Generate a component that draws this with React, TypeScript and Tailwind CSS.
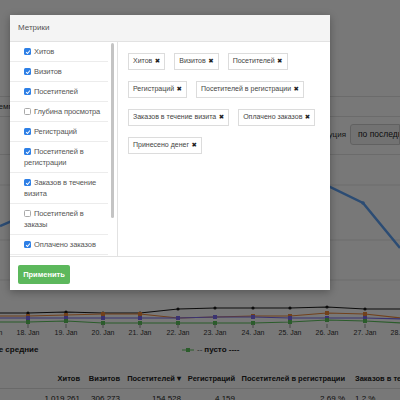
import React from "react";

type Metric = { label: string; checked: boolean };

const metrics: Metric[] = [
  { label: "Хитов", checked: true },
  { label: "Визитов", checked: true },
  { label: "Посетителей", checked: true },
  { label: "Глубина просмотра", checked: false },
  { label: "Регистраций", checked: true },
  { label: "Посетителей в регистрации", checked: true },
  { label: "Заказов в течение визита", checked: true },
  { label: "Посетителей в заказы", checked: false },
  { label: "Оплачено заказов", checked: true },
];

const selected = [
  "Хитов",
  "Визитов",
  "Посетителей",
  "Регистраций",
  "Посетителей в регистрации",
  "Заказов в течение визита",
  "Оплачено заказов",
  "Принесено денег",
];

const days = ["17. Jan", "18. Jan", "19. Jan", "20. Jan", "21. Jan", "22. Jan", "23. Jan", "24. Jan", "25. Jan", "26. Jan", "27. Jan", "28. Jan"];

// x positions of the chart points, one per day
const xs = [-9, 28, 66, 103, 140, 178, 215, 253, 290, 327, 365, 402];

const series = [
  { color: "#1a1a1a", ys: [13, 13, 12, 13, 13, 9, 8, 8, 8, 7, 9, 9], square: false },
  { color: "#f08a3c", ys: [16, 16, 15, 14, 14, 18, 17, 16, 16, 13, 14, 18], square: true },
  { color: "#7b6cf0", ys: [18, 18, 18, 18, 18, 18, 17, 17, 18, 18, 18, 19], square: true },
  { color: "#5cc35c", ys: [22, 22, 21, 23, 23, 23, 23, 23, 22, 20, 21, 23], square: true },
];

function Checkbox({ checked }: { checked: boolean }) {
  if (!checked) {
    return <span className="mr-[3px] inline-block h-[7px] w-[7px] rounded-[1.5px] border border-[#a9a9a9] bg-white align-[-0.5px]" />;
  }
  return (
    <span className="mr-[3px] inline-flex h-[7px] w-[7px] items-center justify-center rounded-[1.5px] bg-[#2d7fe6] align-[-0.5px]">
      <svg viewBox="0 0 8 8" className="h-[6px] w-[6px]">
        <path d="M1.5 4.2 L3.3 6 L6.6 2" fill="none" stroke="white" strokeWidth="1.4" />
      </svg>
    </span>
  );
}

export default function App() {
  return (
    <div className="relative flex h-[400px] w-[400px] flex-col overflow-hidden bg-white font-['Liberation_Sans',Arial,sans-serif] text-[#222]">
      {/* page behind the dialog */}
      <div className="h-[97px] shrink-0 border-b border-[#e4e4e4]" />
      <div className="flex h-[20px] shrink-0 items-center border-b border-[#e4e4e4] text-[8px] text-[#333]">
        <span className="-ml-[6px]">Темп прироста</span>
      </div>
      <div className="flex h-[38px] shrink-0 items-start justify-end gap-[4px] border-b border-[#e4e4e4] pt-[7px] text-[8px] text-[#333]">
        <span className="mt-[5px]">Атрибуция</span>
        <div className="flex h-[21px] w-[50px] items-center overflow-hidden whitespace-nowrap rounded-l-[3px] border border-[#cfcfcf] bg-[#f2f2f2] pl-[7px] text-[8.5px] text-[#222]">
          по последнему
        </div>
      </div>
      <svg width="400" height="145" className="block shrink-0">
        <line x1="0" y1="30" x2="400" y2="30" stroke="#e6e6e6" />
        <line x1="0" y1="85" x2="400" y2="85" stroke="#e6e6e6" />
        <line x1="0" y1="125" x2="400" y2="125" stroke="#e6e6e6" />
        <polyline
          points="0,71 12,66 60,30 150,12 250,8 330,32 363,48 400,93"
          fill="none"
          stroke="#5fa2f5"
          strokeWidth="2.5"
        />
        <circle cx="363" cy="48" r="1.8" fill="#5fa2f5" />
      </svg>
      <svg width="400" height="28" className="block shrink-0">
        {series.map((s, i) => (
          <g key={i}>
            <polyline points={xs.map((x, j) => `${x},${s.ys[j]}`).join(" ")} fill="none" stroke={s.color} strokeWidth="1.2" />
            {xs.map((x, j) =>
              s.square ? (
                <rect key={j} x={x - 2} y={s.ys[j] - 2} width="4" height="4" fill={s.color} />
              ) : (
                <circle key={j} cx={x} cy={s.ys[j]} r="1.6" fill={s.color} />
              )
            )}
          </g>
        ))}
        {xs.map((x, j) => (
          <line key={j} x1={x} y1="24" x2={x} y2="28" stroke="#999" />
        ))}
      </svg>
      <div className="relative h-[10px] shrink-0 text-[7px] leading-[10px] text-[#333]">
        {days.map((d, j) => (
          <span key={d} className="absolute top-0 -translate-x-1/2 whitespace-nowrap" style={{ left: xs[j] }}>
            {d}
          </span>
        ))}
      </div>
      <div className="mt-[5px] flex h-[14px] shrink-0 items-center whitespace-nowrap text-[8px] text-[#222]">
        <span className="-ml-[46px] w-[228px] font-bold">Скользящие средние</span>
        <svg width="12" height="6" className="mr-[3px] shrink-0">
          <line x1="0" y1="3" x2="12" y2="3" stroke="#5cc35c" />
          <rect x="4" y="1" width="4" height="4" fill="#5cc35c" />
        </svg>
        <span className="text-[#555]">-- </span>
        <span className="ml-[2px] font-bold">пусто ----</span>
      </div>
      <div className="mt-[13px] grid shrink-0 grid-cols-[84px_40px_61px_54px_110px_1fr] whitespace-nowrap border-b border-[#e0e0e0] text-[7.5px] font-bold leading-[18px] text-[#222]">
        <span className="pr-[4px] text-right">Хитов</span>
        <span className="pr-[4px] text-right">Визитов</span>
        <span className="pr-[4px] text-right">Посетителей ▾</span>
        <span className="pr-[4px] text-right">Регистраций</span>
        <span className="pr-[4px] text-right">Посетителей в регистрации</span>
        <span className="pl-[6px]">Заказов в течение визита</span>
      </div>
      <div className="grid shrink-0 grid-cols-[84px_40px_61px_54px_110px_1fr] whitespace-nowrap text-[8px] leading-[20px] text-[#222]">
        <span className="pr-[4px] text-right">1 019 261</span>
        <span className="pr-[4px] text-right">306 273</span>
        <span className="pr-[4px] text-right">154 528</span>
        <span className="pr-[4px] text-right">4 159</span>
        <span className="pr-[4px] text-right">2,69 %</span>
        <span className="pl-[6px]">1,2 %</span>
      </div>

      {/* dim overlay */}
      <div className="absolute inset-0 bg-black/[0.53]" />

      {/* dialog */}
      <div className="absolute left-[10px] top-[15px] flex h-[275px] w-[320px] flex-col bg-white shadow-[0_2px_8px_rgba(0,0,0,0.3)]">
        <div className="flex h-[27px] shrink-0 items-center border-b border-[#e2e2e2] bg-[#f4f4f4] px-[8px] text-[8px] text-[#555]">
          Метрики
        </div>
        <div className="flex h-[214px] shrink-0">
          <div className="w-[98px] shrink-0 overflow-hidden">
            {metrics.map((m) => (
              <div key={m.label} className="border-b border-[#ececec] py-[4px] pl-[14px] pr-0 text-[7.5px] leading-[11px] tracking-[-0.1px] text-[#555]">
                <Checkbox checked={m.checked} />
                {m.label}
              </div>
            ))}
          </div>
          <div className="w-[9px] shrink-0 pl-[2.5px] pt-[1px]">
            <div className="h-[175px] w-[3.5px] rounded-full bg-[#c4c4c4]" />
          </div>
          <div className="flex flex-1 flex-wrap content-start gap-x-[9px] gap-y-[11px] border-l border-[#e2e2e2] pl-[10px] pr-[2px] pt-[11px]">
            {selected.map((s) => (
              <div key={s} className="flex h-[17px] items-center gap-[2.5px] whitespace-nowrap border border-[#dcdcdc] px-[4px] text-[7px] text-[#444]">
                <span>{s}</span>
                <span className="font-['DejaVu_Sans',sans-serif] text-[6.5px] text-[#222]">✖</span>
              </div>
            ))}
          </div>
        </div>
        <div className="flex flex-1 items-start border-t border-[#e2e2e2] px-[8px] pt-[8px]">
          <button type="button" className="h-[19px] w-[52px] rounded-[2px] bg-[#5cb85c] text-[7.5px] font-semibold text-white">
            Применить
          </button>
        </div>
      </div>
    </div>
  );
}
